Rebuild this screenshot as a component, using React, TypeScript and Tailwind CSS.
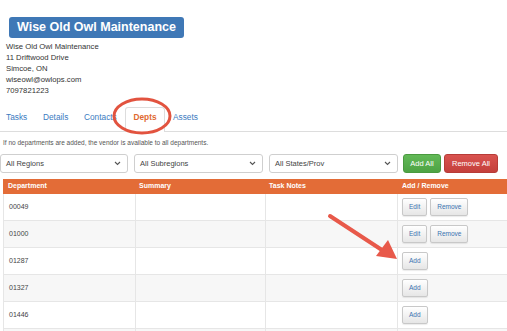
import React from 'react';

const rows = [
  { dept: '00049', added: true },
  { dept: '01000', added: true },
  { dept: '01287', added: false },
  { dept: '01327', added: false },
  { dept: '01446', added: false },
];

const SmallBtn = ({ label }: { label: string }) => (
  <button className="h-[18px] px-[6px] rounded-[2px] border border-[#c8c8c8] bg-gradient-to-b from-white to-[#e6e6e6] text-[6.5px] text-[#3a72b0] leading-none shadow-[0_1px_1px_rgba(0,0,0,0.08)]">
    {label}
  </button>
);

const Select = ({ label, w }: { label: string; w: string }) => (
  <div className={`${w} h-[19px] flex items-center justify-between px-[5px] border border-[#cfcfcf] rounded-[3px] bg-white text-[7.5px] text-[#444]`}>
    <span>{label}</span>
    <svg width="7" height="5" viewBox="0 0 7 5" className="mr-[1px]">
      <path d="M1 1l2.5 2.5L6 1" fill="none" stroke="#555" strokeWidth="1.1" />
    </svg>
  </div>
);

const App = () => {
  return (
    <div className="relative w-[507px] h-[331px] overflow-hidden bg-white font-['Liberation_Sans',Arial,sans-serif]">
      {/* Vendor header */}
      <div className="pt-[14px] pl-[9px]">
        <div className="inline-flex items-center h-[21px] px-[8px] rounded-[3px] bg-[#3f78b6] text-white font-bold text-[12.5px] leading-none">
          Wise Old Owl Maintenance
        </div>
      </div>
      <div className="pl-[6px] pt-[3px] text-[7.7px] leading-[11px] text-[#333]">
        <div>Wise Old Owl Maintenance</div>
        <div>11 Driftwood Drive</div>
        <div>Simcoe, ON</div>
        <div>wiseowl@owlops.com</div>
        <div>7097821223</div>
      </div>

      {/* Tabs */}
      <div className="mt-[7px] flex items-end h-[29px] border-b border-[#dddddd] text-[8.3px] text-[#3b7bbf]">
        <div className="pl-[6px] w-[43px] pb-[8px]">Tasks</div>
        <div className="w-[41px] pb-[8px]">Details</div>
        <div className="w-[41px] pb-[8px]">Contacts</div>
        <div className="w-[40px] h-[25px] -mb-px pb-[9px] flex items-end justify-center border border-b-0 border-[#dddddd] bg-white rounded-t-[3px] text-[#e0692f] font-bold">
          Depts
        </div>
        <div className="pl-[8px] pb-[8px]">Assets</div>
      </div>

      <div className="pl-[3px] pt-[6px] text-[6.5px] text-[#555]">
        If no departments are added, the vendor is available to all departments.
      </div>

      {/* Filters */}
      <div className="mt-[6px] flex items-center h-[20px]">
        <Select label="All Regions" w="w-[128px]" />
        <div className="ml-[6px]">
          <Select label="All Subregions" w="w-[129px]" />
        </div>
        <div className="ml-[6px]">
          <Select label="All States/Prov" w="w-[129px]" />
        </div>
        <button className="ml-[5px] h-[19px] w-[38px] rounded-[3px] border border-[#4a9a3f] bg-gradient-to-b from-[#62b957] to-[#4ea344] text-white text-[7.5px]">
          Add All
        </button>
        <button className="ml-[3px] h-[19px] w-[54px] rounded-[3px] border border-[#b73c38] bg-gradient-to-b from-[#d9534f] to-[#c4403c] text-white text-[7.5px]">
          Remove All
        </button>
      </div>

      {/* Table */}
      <div className="ml-[3px] mt-[5px]">
        <div className="flex h-[15px] items-center bg-[#e36c37] text-white font-bold text-[7px]">
          <div className="w-[132px] pl-[5px]">Department</div>
          <div className="w-[130px] pl-[4px]">Summary</div>
          <div className="w-[132px] pl-[4px]">Task Notes</div>
          <div className="pl-[5px]">Add / Remove</div>
        </div>
        {rows.map((r, i) => (
          <div
            key={r.dept}
            className={`flex h-[27px] border-b border-[#e6e6e6] text-[7px] text-[#444] ${i % 2 === 1 ? 'bg-[#f7f7f7]' : 'bg-white'}`}
          >
            <div className="w-[132px] pl-[5px] flex items-center border-l border-[#e6e6e6]">{r.dept}</div>
            <div className="w-[130px] border-l border-[#e6e6e6]" />
            <div className="w-[132px] border-l border-[#e6e6e6]" />
            <div className="flex-1 pl-[4px] flex items-center gap-[3px] border-l border-[#e6e6e6]">
              {r.added ? (
                <>
                  <SmallBtn label="Edit" />
                  <SmallBtn label="Remove" />
                </>
              ) : (
                <SmallBtn label="Add" />
              )}
            </div>
          </div>
        ))}
        {/* next row, mostly below the fold */}
        <div className="flex h-[27px] bg-[#f7f7f7]">
          <div className="w-[132px] border-l border-[#e6e6e6]" />
          <div className="w-[130px] border-l border-[#e6e6e6]" />
          <div className="w-[132px] border-l border-[#e6e6e6]" />
          <div className="flex-1 border-l border-[#e6e6e6]" />
        </div>
      </div>

      {/* Annotations */}
      <svg className="absolute left-0 top-0 pointer-events-none" width="507" height="331">
        <ellipse cx="142" cy="116" rx="28" ry="17" fill="none" stroke="#e2533f" strokeWidth="3" />
        <line x1="330" y1="216" x2="385" y2="252" stroke="#e8594a" strokeWidth="4" strokeLinecap="round" />
        <polygon points="397,259 376,256 388,240" fill="#e8594a" />
      </svg>
    </div>
  );
};

export default App;
